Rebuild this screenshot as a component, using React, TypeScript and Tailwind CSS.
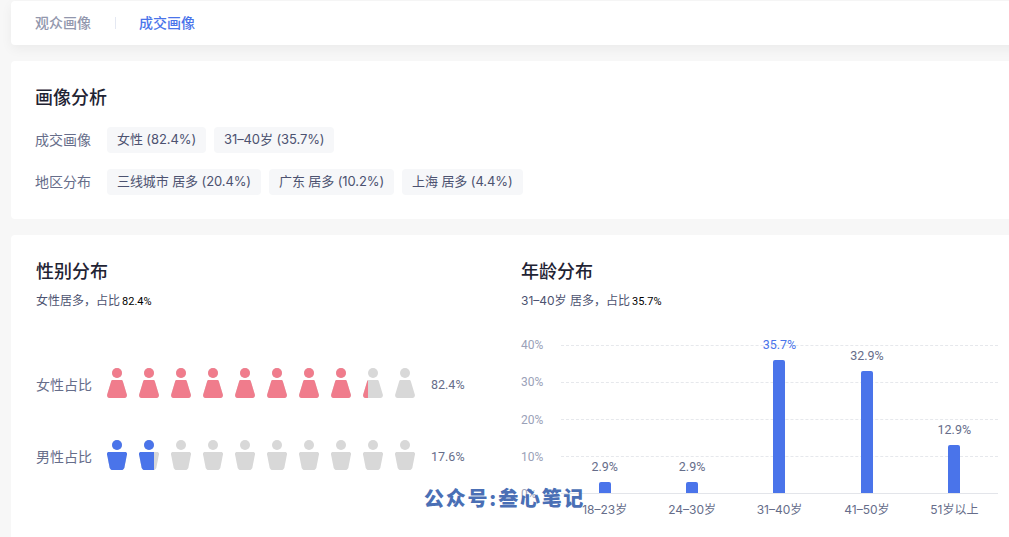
const FONT = "font-['Inter','Noto_Sans_CJK_SC',sans-serif]";
const NUM = "font-['Roboto','Noto_Sans_CJK_SC',sans-serif]";

const ageData = [
  { label: "18–23岁", value: 2.9 },
  { label: "24–30岁", value: 2.9 },
  { label: "31–40岁", value: 35.7, active: true },
  { label: "41–50岁", value: 32.9 },
  { label: "51岁以上", value: 12.9 },
];

const FEMALE = "M5.8 12H14.2C15 12 15.6 12.5 15.8 13.2L19.8 26.4C20.3 28.2 19.2 30 17.4 30H2.6C0.8 30 -0.3 28.2 0.2 26.4L4.2 13.2C4.4 12.5 5 12 5.8 12Z";
const MALE = "M1.8 12H18.2C19.4 12 20.2 13 20 14.2L17.4 27.4C17.1 28.9 15.9 30 14.4 30H5.6C4.1 30 2.9 28.9 2.6 27.4L0 14.2C-0.2 13 0.6 12 1.8 12Z";

function Figure({ body, color }: { body: string; color: string }) {
  return (
    <svg width="20" height="30" viewBox="0 0 20 30" className={`block max-w-none shrink-0 ${color}`}>
      <circle cx="10" cy="5" r="5" fill="currentColor" />
      <path d={body} fill="currentColor" />
    </svg>
  );
}

function PersonRow({ label, percent, body, color }: { label: string; percent: number; body: string; color: string }) {
  return (
    <div className="flex h-[30px] items-center">
      <span className="mt-1 w-[71px] shrink-0 text-sm text-[#666d8a]">{label}</span>
      <div className="flex w-[324px] shrink-0 gap-3">
        {Array.from({ length: 10 }).map((_, i) => {
          const fill = Math.max(0, Math.min(1, percent / 10 - i));
          return (
            <div key={i} className="relative h-[30px] w-5 shrink-0">
              <Figure body={body} color="text-[#d8d8d8]" />
              <div className="absolute left-0 top-0 h-full overflow-hidden" style={{ width: `${fill * 100}%` }}>
                <Figure body={body} color={color} />
              </div>
            </div>
          );
        })}
      </div>
      <span className={`mt-1 text-[12.5px] text-[#666d8a] ${NUM}`}>{percent}%</span>
    </div>
  );
}

function Tag({ children }: { children: React.ReactNode }) {
  return (
    <span className="flex h-[26px] items-center rounded bg-[#f6f7f9] px-2.5 text-[13px] tracking-[-0.1px] text-[#4c5270]">{children}</span>
  );
}

function AgeChart() {
  return (
    <div className="mt-[34px] flex">
      <div className={`flex h-[149px] w-10 shrink-0 flex-col justify-between text-xs leading-none text-[#9aa1b8] ${NUM}`}>
        <span className="-mt-[6px]">40%</span>
        <span>30%</span>
        <span>20%</span>
        <span>10%</span>
        <span className="-mb-[6px]">0%</span>
      </div>
      <div className="w-[437px] shrink-0">
        <div className="relative flex h-[149px] flex-col justify-between border-b border-[#e3e5ea]">
          <div className="border-t border-dashed border-[#e6e8ec]" />
          <div className="border-t border-dashed border-[#e6e8ec]" />
          <div className="border-t border-dashed border-[#e6e8ec]" />
          <div className="border-t border-dashed border-[#e6e8ec]" />
          <div className="h-0" />
          <div className="absolute inset-0 grid grid-cols-5 grid-rows-1">
            {ageData.map((d) => (
              <div key={d.label} className="flex min-h-0 flex-col items-center justify-end">
                <span className={`mb-2 text-[12.5px] leading-[14px] ${NUM} ${d.active ? "text-[#4a74ea]" : "text-[#666d8a]"}`}>
                  {d.value}%
                </span>
                <div className="w-3 shrink-0 rounded-t-[2px] bg-[#4a74ea]" style={{ height: d.value * 3.72 }} />
              </div>
            ))}
          </div>
        </div>
        <div className="mt-[9px] grid grid-cols-5">
          {ageData.map((d) => (
            <span key={d.label} className="text-center text-xs leading-[14px] text-[#666d8a]">{d.label}</span>
          ))}
        </div>
      </div>
    </div>
  );
}

export default function App() {
  return (
    <div className={`relative h-[537px] w-[1009px] overflow-hidden bg-[#f7f7f7] ${FONT}`}>
      <div className="flex w-[1040px] flex-col gap-4 pl-[11px] pt-px">
        <div className="flex h-11 items-center rounded bg-white pl-6 text-sm shadow-[0_4px_12px_rgba(0,0,0,0.05)]">
          <span className="font-medium text-[#9297ad]">观众画像</span>
          <span className="ml-6 mr-[23px] h-3 w-px bg-[#e4e8f2]" />
          <span className="font-medium text-[#4a74ea]">成交画像</span>
        </div>

        <div className="h-[158px] rounded bg-white pl-6 pt-[25px]">
          <h2 className="text-lg font-medium leading-6 text-[#1f2333]">画像分析</h2>
          <div className="mt-[17px] flex items-center">
            <span className="w-[72px] text-sm text-[#666d8a]">成交画像</span>
            <div className="flex gap-2">
              <Tag>女性 (82.4%)</Tag>
              <Tag>31–40岁 (35.7%)</Tag>
            </div>
          </div>
          <div className="mt-4 flex items-center">
            <span className="w-[72px] text-sm text-[#666d8a]">地区分布</span>
            <div className="flex gap-2">
              <Tag>三线城市 居多 (20.4%)</Tag>
              <Tag>广东 居多 (10.2%)</Tag>
              <Tag>上海 居多 (4.4%)</Tag>
            </div>
          </div>
        </div>

        <div className="flex h-[320px] rounded bg-white pl-[25px] pt-[25px]">
          <div className="w-[485px] shrink-0">
            <h2 className="text-lg font-medium leading-6 text-[#1f2333]">性别分布</h2>
            <p className="mt-2 text-xs leading-[18px] text-[#4c5270]">
              女性居多，占比<span className={`ml-0.5 text-[11px] text-black ${NUM}`}>82.4%</span>
            </p>
            <div className="mt-[57px] flex flex-col gap-[42px]">
              <PersonRow label="女性占比" percent={82.4} body={FEMALE} color="text-[#f07c8c]" />
              <PersonRow label="男性占比" percent={17.6} body={MALE} color="text-[#4a74ea]" />
            </div>
          </div>
          <div className="flex-1">
            <h2 className="text-lg font-medium leading-6 text-[#1f2333]">年龄分布</h2>
            <p className="mt-2 text-xs leading-[18px] text-[#4c5270]">
              31–40岁 居多，占比<span className={`ml-0.5 text-[11px] text-black ${NUM}`}>35.7%</span>
            </p>
            <AgeChart />
          </div>
        </div>
      </div>

      <div className="absolute left-[424px] top-[487px] text-[20px] font-black leading-6 tracking-[1.7px] text-[#4a6fb5]">
        公众号:叁心笔记
      </div>
    </div>
  );
}
